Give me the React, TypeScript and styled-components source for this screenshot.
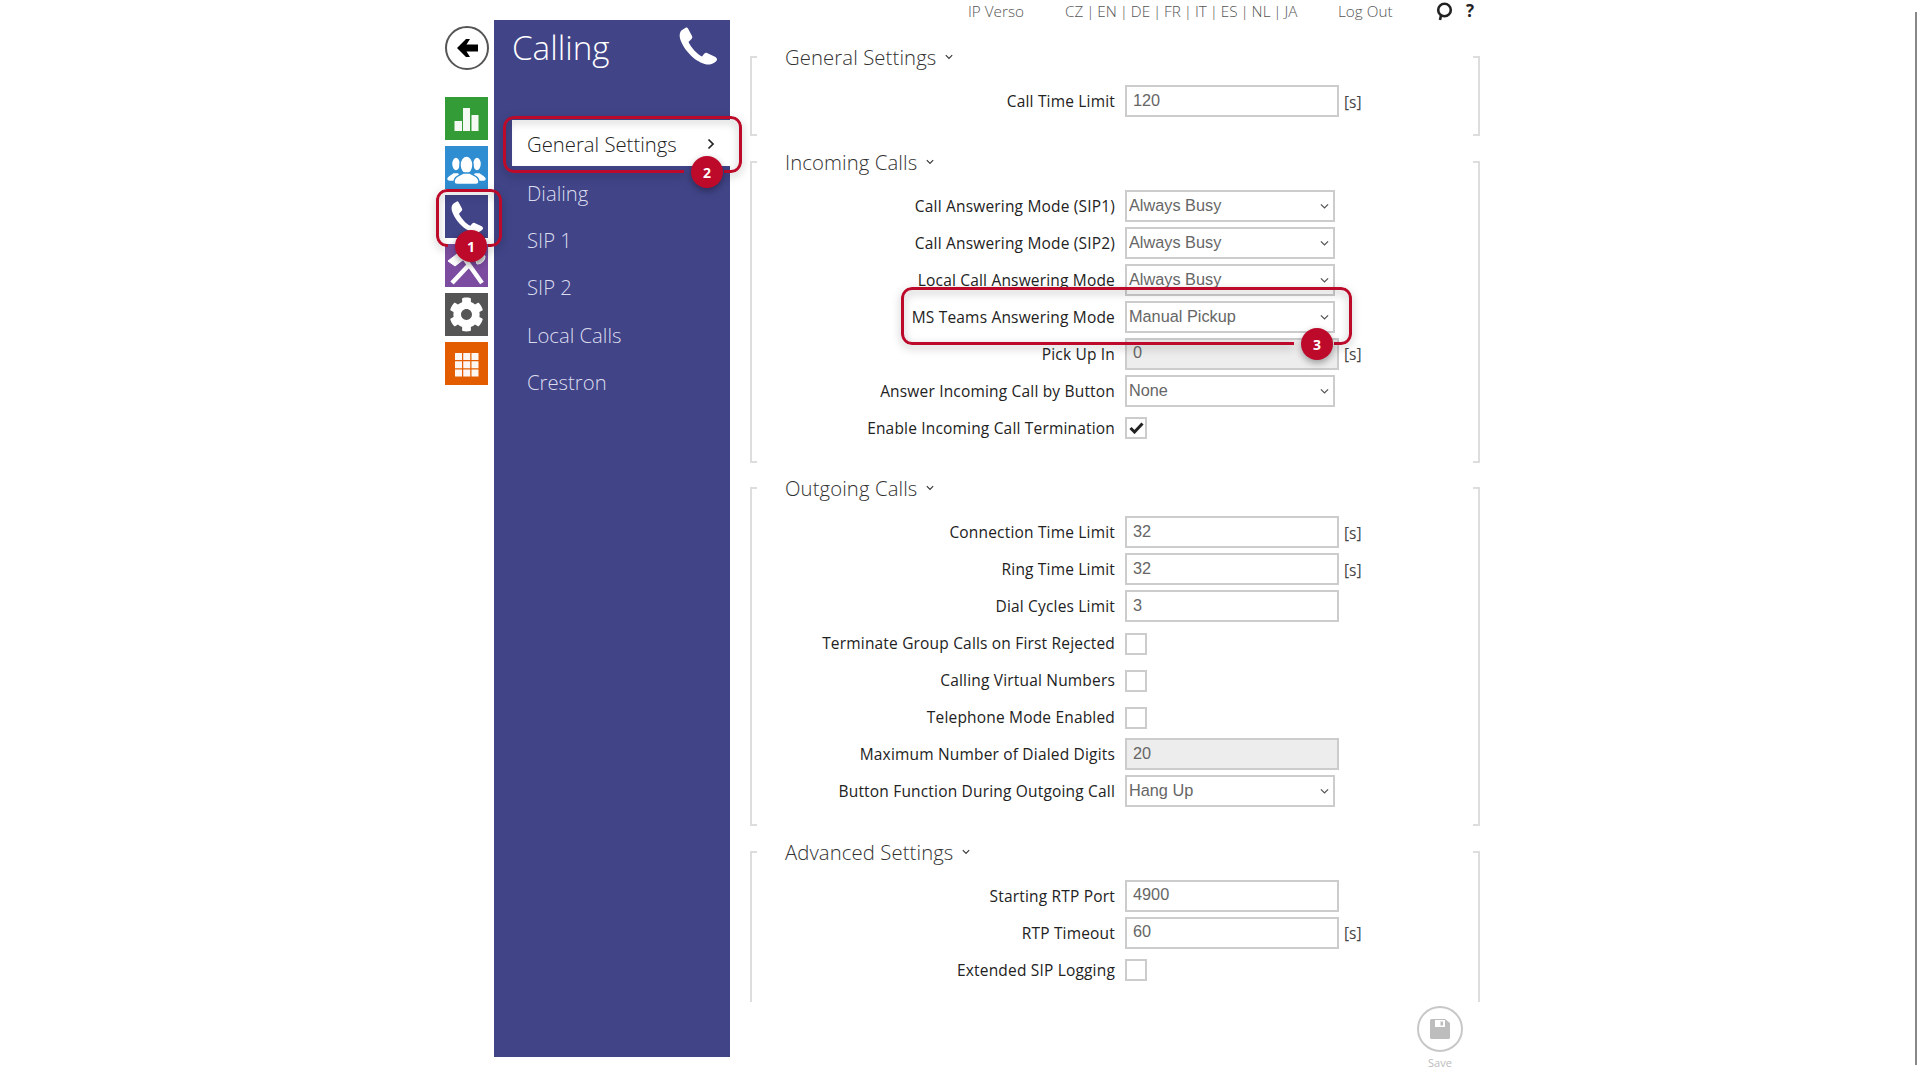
import React from 'react';
import styled, { createGlobalStyle } from 'styled-components';
import { FaCog } from 'react-icons/fa';

const GlobalStyle = createGlobalStyle`
  html, body {
    margin: 0;
    padding: 0;
    background: #fff;
  }
  * {
    box-sizing: border-box;
  }
`;

const FONT = `"Open Sans", "Noto Sans", sans-serif`;
const CONTROL_FONT = `"Liberation Sans", Arial, sans-serif`;

const PhoneIcon = ({ size }: { size: number }) => (
  <svg width={size} height={size} viewBox="0 0 38 38" fill="#fff">
    <path d="M7 .5 3 3C.5 5 0 9 1.500 13 4 20 9 26 14 30.500c5 4 11 7.500 17 7 3-.5 6-2.500 7-4.500 0-1.500-.5-2-1.500-3L28 26c-1-.5-2 0-3 1l-2 2.500C18 27 12 20.500 9.500 15l3-3c1-1 1-2 .5-3L9 1.500C8.500.5 7.800.2 7 .5Z" />
  </svg>
);

const BackArrow = () => (
  <svg width="21" height="18" viewBox="0 0 21 18" fill="#000">
    <path d="M0 9 9 0h4L9.500 5.500H21v7H9.500L13 18H9Z" />
  </svg>
);

const BarsIcon = () => (
  <svg width="43" height="43" viewBox="0 0 43 43" fill="#fff" opacity="0.95">
    <rect x="9.500" y="24" width="7.500" height="10" />
    <rect x="18" y="11" width="7" height="23" />
    <rect x="26.500" y="18" width="7" height="16" />
  </svg>
);

const UsersIcon = () => (
  <svg width="43" height="43" viewBox="0 0 43 43" fill="#fff" stroke="#2f8ed1" strokeWidth="1.500">
    <ellipse cx="11" cy="18" rx="4.500" ry="7" />
    <path d="M1.500 33c0-3 4-4.500 7-6.500h5l5 7v2H5c-2 0-3.500-1-3.500-2.500Z" />
    <ellipse cx="32" cy="18" rx="4.500" ry="7" />
    <path d="M41.500 33c0-3-4-4.500-7-6.500h-5l-5 7v2h14c2 0 3-1 3-2.500Z" />
    <ellipse cx="21.500" cy="19" rx="6.500" ry="9" />
    <path d="M9 36c0-5 4-6 9-9h7c5 3 9 4 9 9 0 1.500-1 2.500-3 2.500H12c-2 0-3-1-3-2.500Z" />
  </svg>
);

const ToolsIcon = () => (
  <svg width="43" height="43" viewBox="0 0 43 43" fill="none" stroke="#fff">
    <path d="M7 39 23 22" strokeWidth="4.500" />
    <path d="M37 39 17 11" strokeWidth="4.500" />
    <path d="M3 17 16 7l7 5-13 10Z" fill="#fff" strokeWidth="1" />
    <path d="M30 14c3 0 6-1 7-3l3 1c0 5-4 8-8 8Z" fill="#ddd" strokeWidth="1" />
  </svg>
);

const GridIcon = () => (
  <svg width="43" height="43" viewBox="0 0 43 43" fill="#fff" opacity="0.95">
    {[10, 18.250, 26.500].map((y) =>
      [10, 18.250, 26.500].map((x) => <rect key={`${x}-${y}`} x={x} y={y + 1} width="7" height="7" />),
    )}
  </svg>
);

const ChevronDown = ({ size = 9, color = '#555' }: { size?: number; color?: string }) => (
  <svg width={size} height={size * 0.7} viewBox="0 0 10 7" fill="none" stroke={color} strokeWidth="1.400">
    <path d="M1 1.500 5 5.500l4-4" />
  </svg>
);

const ChatIcon = () => (
  <svg width="17" height="19" viewBox="0 0 17 19" fill="none" stroke="#222" strokeWidth="2.600">
    <circle cx="8.500" cy="8" r="6.300" />
    <path d="M5 13.500 4 18" />
  </svg>
);

const DiskIcon = () => (
  <svg width="20" height="20" viewBox="0 0 20 20">
    <path d="M1.500 0H15l5 4v14.500A1.500 1.500 0 0 1 18.500 20h-17A1.500 1.500 0 0 1 0 18.500v-17A1.500 1.500 0 0 1 1.500 0Z" fill="#bdbdbd" />
    <rect x="5" y="1" width="10" height="7" fill="#fff" />
    <rect x="10.500" y="2.500" width="2.500" height="4" fill="#bdbdbd" />
  </svg>
);

const Page = styled.div`
  position: relative;
  display: flex;
  align-items: flex-start;
  width: 1920px;
  height: 1080px;
  padding-left: 445px;
  overflow: hidden;
  background: #fff;
  font-family: ${FONT};
`;

const Rail = styled.div`
  display: flex;
  flex-direction: column;
  gap: 6px;
  width: 44px;
  padding-top: 26px;
`;

const BackButton = styled.div`
  display: flex;
  align-items: center;
  justify-content: center;
  width: 44px;
  height: 44px;
  margin-bottom: 21px;
  border: 2px solid #555;
  border-radius: 50%;
`;

const Tile = styled.div<{ $color: string }>`
  display: flex;
  align-items: center;
  justify-content: center;
  width: 43px;
  height: 43px;
  background: ${(p) => p.$color};
  color: #fff;
`;

const Nav = styled.nav`
  width: 236px;
  height: 1037px;
  margin-top: 20px;
  margin-left: 5px;
  background: #414487;
`;

const NavHeader = styled.div`
  display: flex;
  align-items: flex-start;
  justify-content: space-between;
  height: 100px;
  padding: 7px 13px 0 18px;
`;

const NavTitle = styled.div`
  color: #fff;
  font-size: 33.200px;
  font-weight: 300;
  line-height: 42px;
`;

const NavList = styled.div`
  display: flex;
  flex-direction: column;
`;

const NavItem = styled.div<{ $active?: boolean }>`
  display: flex;
  align-items: center;
  justify-content: space-between;
  height: ${(p) => (p.$active ? '46px' : '47.3px')};
  margin-left: 18px;
  margin-bottom: ${(p) => (p.$active ? '3px' : '0')};
  padding: ${(p) => (p.$active ? '1px' : '0')} 15px 0;
  background: ${(p) => (p.$active ? '#fff' : 'transparent')};
  color: ${(p) => (p.$active ? '#222' : '#dcdcee')};
  font-size: 20.300px;
  font-weight: 300;
`;

const Content = styled.main`
  width: 730px;
  margin-left: 20px;
`;

const TopBar = styled.div`
  display: grid;
  grid-template-columns: 97px 273px 98px 30px auto;
  align-items: center;
  height: 22px;
  margin-bottom: 34px;
  padding-left: 218px;
  color: #555;
  font-size: 15.300px;
  font-weight: 300;
`;

const Languages = styled.span`
  word-spacing: -1.100px;
`;

const Help = styled.span`
  margin-top: -2px;
  color: #222;
  font-size: 17px;
  font-weight: 700;
`;

const Section = styled.section<{ $open?: boolean }>`
  display: flow-root;
  margin-bottom: 24.500px;
  padding-bottom: 19px;
  height: ${(p) => (p.$open ? '151px' : 'auto')};
  background:
    linear-gradient(#ddd, #ddd) left top / 2px 100% no-repeat,
    linear-gradient(#ddd, #ddd) right top / 2px 100% no-repeat,
    linear-gradient(#ddd, #ddd) left top / 7px 2px no-repeat,
    linear-gradient(#ddd, #ddd) right top / 7px 2px no-repeat
    ${(p) =>
      p.$open
        ? ''
        : `,
    linear-gradient(#ddd, #ddd) left bottom / 7px 2px no-repeat,
    linear-gradient(#ddd, #ddd) right bottom / 7px 2px no-repeat`};
`;

const SectionTitle = styled.h2`
  display: flex;
  align-items: center;
  gap: 9px;
  height: 30px;
  margin: -14px 0 13px 35px;
  color: #333;
  font-size: 20.300px;
  font-weight: 300;
  letter-spacing: 0.1px;
`;

const Rows = styled.div`
  display: flex;
  flex-direction: column;
  gap: 5px;
`;

const Row = styled.div`
  display: flex;
  align-items: center;
  height: 32px;
`;

const Label = styled.label`
  flex: none;
  width: 365px;
  margin-right: 10px;
  color: #222;
  font-size: 15.500px;
  letter-spacing: 0.18px;
  text-align: right;
`;

const TextInput = styled.input`
  width: 214px;
  height: 32px;
  padding: 0 6px 2px 6px;
  border: 2px solid #ccc;
  border-radius: 0;
  outline: none;
  background: ${(p) => (p.disabled ? '#ededed' : '#fff')};
  color: #666;
  font-family: ${CONTROL_FONT};
  font-size: 16.300px;
`;

const SelectWrap = styled.div`
  position: relative;
  width: 210px;
  height: 32px;
`;

const Select = styled.select`
  width: 100%;
  height: 100%;
  padding: 0 0 2px 2px;
  border: 2px solid #ccc;
  border-radius: 0;
  outline: none;
  appearance: none;
  background: #fff;
  color: #666;
  font-family: ${CONTROL_FONT};
  font-size: 16.300px;
`;

const SelectArrow = styled.span`
  position: absolute;
  top: 13px;
  right: 6px;
  line-height: 0;
`;

const Unit = styled.span`
  margin-left: 5px;
  padding-top: 1px;
  color: #444;
  font-size: 15.500px;
`;

const CheckBox = styled.span`
  display: flex;
  align-items: center;
  justify-content: center;
  width: 22px;
  height: 22px;
  margin-top: 1px;
  border: 2px solid #ccc;
  background: #fff;
`;

const SaveBlock = styled.div`
  display: flex;
  flex-direction: column;
  align-items: center;
  width: 46px;
  margin: -20.500px 17px 0 auto;
  color: #bbb;
  font-size: 11px;
`;

const SaveCircle = styled.div`
  display: flex;
  align-items: center;
  justify-content: center;
  width: 46px;
  height: 46px;
  margin-bottom: 3px;
  border: 2px solid #c8c8c8;
  border-radius: 50%;
`;

const ScrollThumb = styled.div`
  position: absolute;
  top: 12px;
  left: 1915px;
  width: 2px;
  height: 1053px;
  background: #888;
`;

const FrameLayer = styled.div`
  position: absolute;
  inset: 0;
  pointer-events: none;
  filter: drop-shadow(0 3px 4px rgba(0, 0, 0, 0.3));
`;

const Frame = styled.div<{ $x: number; $y: number; $w: number; $h: number; $bx: number; $by: number }>`
  position: absolute;
  left: ${(p) => p.$x}px;
  top: ${(p) => p.$y}px;
  width: ${(p) => p.$w}px;
  height: ${(p) => p.$h}px;
  border: 3px solid #bd0a2b;
  border-radius: 11px;
  mask-image: radial-gradient(circle 20px at ${(p) => p.$bx - p.$x - 3}px ${(p) => p.$by - p.$y - 3}px, transparent 99%, #000 100%);
`;

const Badge = styled.div<{ $bx: number; $by: number }>`
  position: absolute;
  left: ${(p) => p.$bx - 16}px;
  top: ${(p) => p.$by - 16}px;
  display: flex;
  align-items: center;
  justify-content: center;
  width: 32px;
  height: 32px;
  border-radius: 50%;
  background: #bd0a2b;
  box-shadow: 0 3px 7px rgba(0, 0, 0, 0.35);
  color: #fff;
  font-size: 14px;
  font-weight: 700;
`;

type CalloutProps = { n: number; x: number; y: number; w: number; h: number; bx: number; by: number };

const Callout = ({ n, x, y, w, h, bx, by }: CalloutProps) => (
  <>
    <FrameLayer>
      <Frame $x={x} $y={y} $w={w} $h={h} $bx={bx} $by={by} />
    </FrameLayer>
    <Badge $bx={bx} $by={by}>{n}</Badge>
  </>
);

type Field =
  | { kind: 'input'; label: string; value: string; unit?: boolean; disabled?: boolean }
  | { kind: 'select'; label: string; value: string }
  | { kind: 'check'; label: string; checked?: boolean };

const sections: { title: string; open?: boolean; fields: Field[] }[] = [
  {
    title: 'General Settings',
    fields: [{ kind: 'input', label: 'Call Time Limit', value: '120', unit: true }],
  },
  {
    title: 'Incoming Calls',
    fields: [
      { kind: 'select', label: 'Call Answering Mode (SIP1)', value: 'Always Busy' },
      { kind: 'select', label: 'Call Answering Mode (SIP2)', value: 'Always Busy' },
      { kind: 'select', label: 'Local Call Answering Mode', value: 'Always Busy' },
      { kind: 'select', label: 'MS Teams Answering Mode', value: 'Manual Pickup' },
      { kind: 'input', label: 'Pick Up In', value: '0', unit: true, disabled: true },
      { kind: 'select', label: 'Answer Incoming Call by Button', value: 'None' },
      { kind: 'check', label: 'Enable Incoming Call Termination', checked: true },
    ],
  },
  {
    title: 'Outgoing Calls',
    fields: [
      { kind: 'input', label: 'Connection Time Limit', value: '32', unit: true },
      { kind: 'input', label: 'Ring Time Limit', value: '32', unit: true },
      { kind: 'input', label: 'Dial Cycles Limit', value: '3' },
      { kind: 'check', label: 'Terminate Group Calls on First Rejected' },
      { kind: 'check', label: 'Calling Virtual Numbers' },
      { kind: 'check', label: 'Telephone Mode Enabled' },
      { kind: 'input', label: 'Maximum Number of Dialed Digits', value: '20', disabled: true },
      { kind: 'select', label: 'Button Function During Outgoing Call', value: 'Hang Up' },
    ],
  },
  {
    title: 'Advanced Settings',
    open: true,
    fields: [
      { kind: 'input', label: 'Starting RTP Port', value: '4900' },
      { kind: 'input', label: 'RTP Timeout', value: '60', unit: true },
      { kind: 'check', label: 'Extended SIP Logging' },
    ],
  },
];

const FieldControl = ({ field }: { field: Field }) => {
  if (field.kind === 'select') {
    return (
      <SelectWrap>
        <Select defaultValue={field.value}>
          <option>{field.value}</option>
        </Select>
        <SelectArrow>
          <ChevronDown />
        </SelectArrow>
      </SelectWrap>
    );
  }
  if (field.kind === 'check') {
    return (
      <CheckBox>
        {field.checked && (
          <svg width="15" height="12" viewBox="0 0 15 12" fill="none" stroke="#222" strokeWidth="3">
            <path d="M1.500 6 5.500 10 13.500 1.500" />
          </svg>
        )}
      </CheckBox>
    );
  }
  return (
    <>
      <TextInput defaultValue={field.value} disabled={field.disabled} />
      {field.unit && <Unit>[s]</Unit>}
    </>
  );
};

const App = () => {
  return (
    <Page>
      <GlobalStyle />
      <Rail>
        <BackButton>
          <BackArrow />
        </BackButton>
        <Tile $color="#339c37"><BarsIcon /></Tile>
        <Tile $color="#2f8ed1"><UsersIcon /></Tile>
        <Tile $color="#414487"><PhoneIcon size={32} /></Tile>
        <Tile $color="#7b4c9f"><ToolsIcon /></Tile>
        <Tile $color="#555555"><FaCog size={35} /></Tile>
        <Tile $color="#e35d00"><GridIcon /></Tile>
      </Rail>

      <Nav>
        <NavHeader>
          <NavTitle>Calling</NavTitle>
          <PhoneIcon size={38} />
        </NavHeader>
        <NavList>
          <NavItem $active>
            General Settings
            <svg width="8" height="12" viewBox="0 0 8 12" fill="none" stroke="#222" strokeWidth="1.700">
              <path d="M1.500 1.500 6 6l-4.500 4.500" />
            </svg>
          </NavItem>
          <NavItem>Dialing</NavItem>
          <NavItem>SIP 1</NavItem>
          <NavItem>SIP 2</NavItem>
          <NavItem>Local Calls</NavItem>
          <NavItem>Crestron</NavItem>
        </NavList>
      </Nav>

      <Content>
        <TopBar>
          <span>IP Verso</span>
          <Languages>CZ | EN | DE | FR | IT | ES | NL | JA</Languages>
          <span>Log Out</span>
          <ChatIcon />
          <Help>?</Help>
        </TopBar>
        {sections.map((s) => (
          <Section key={s.title} $open={s.open}>
            <SectionTitle>
              {s.title}
              <ChevronDown size={8} color="#333" />
            </SectionTitle>
            <Rows>
              {s.fields.map((f) => (
                <Row key={f.label}>
                  <Label>{f.label}</Label>
                  <FieldControl field={f} />
                </Row>
              ))}
            </Rows>
          </Section>
        ))}
        <SaveBlock>
          <SaveCircle>
            <DiskIcon />
          </SaveCircle>
          Save
        </SaveBlock>
      </Content>

      <ScrollThumb />
      <Callout n={1} x={436} y={188.500} w={66} h={58} bx={471} by={246} />
      <Callout n={2} x={503} y={115.500} w={239} h={57} bx={707} by={172} />
      <Callout n={3} x={901} y={286.500} w={451} h={58} bx={1317} by={344} />
    </Page>
  );
};

export default App;
